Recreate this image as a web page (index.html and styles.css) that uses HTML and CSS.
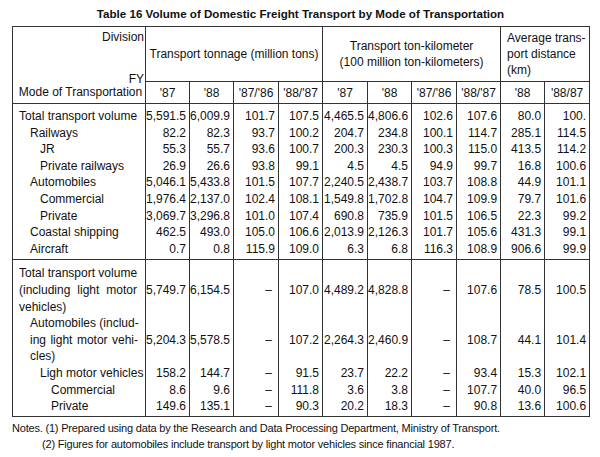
FILE: index.html
```html
<!DOCTYPE html>
<html>
<head>
<meta charset="utf-8">
<link rel="stylesheet" href="styles.css">
</head>
<body>
<div class="page">
  <h1 class="title">Table 16 Volume of Domestic Freight Transport by Mode of Transportation</h1>
  <table class="tbl">
    <colgroup>
      <col class="c-mode">
      <col class="c44"><col class="c44"><col class="c45"><col class="c44"><col class="c45">
      <col class="c44"><col class="c45"><col class="c44"><col class="c44"><col class="c45">
    </colgroup>
    <thead>
      <tr class="h1">
        <th rowspan="2" class="corner">
          <div class="corner-in">
            <span class="div-lbl">Division</span>
            <span class="fy-lbl">FY</span>
            <span class="mode-lbl">Mode of Transportation</span>
          </div>
        </th>
        <th colspan="4" class="grp">Transport tonnage (million tons)</th>
        <th colspan="4" class="grp">Transport ton-kilometer<br>(100 million ton-kilometers)</th>
        <th colspan="2" class="grp avg">Average trans-<br>port distance<br>(km)</th>
      </tr>
      <tr class="h2">
        <th>'87</th><th>'88</th><th>'87/'86</th><th>'88/'87</th>
        <th>'87</th><th>'88</th><th>'87/'86</th><th>'88/'87</th>
        <th>'88</th><th>'88/87</th>
      </tr>
    </thead>
    <tbody class="sec">
      <tr class="first"><td class="l0">Total transport volume</td><td>5,591.5</td><td>6,009.9</td><td>101.7</td><td>107.5</td><td>4,465.5</td><td>4,806.6</td><td>102.6</td><td>107.6</td><td>80.0</td><td>100.</td></tr>
      <tr><td class="l1">Railways</td><td>82.2</td><td>82.3</td><td>93.7</td><td>100.2</td><td>204.7</td><td>234.8</td><td>100.1</td><td>114.7</td><td>285.1</td><td>114.5</td></tr>
      <tr><td class="l2">JR</td><td>55.3</td><td>55.7</td><td>93.6</td><td>100.7</td><td>200.3</td><td>230.3</td><td>100.3</td><td>115.0</td><td>413.5</td><td>114.2</td></tr>
      <tr><td class="l2">Private railways</td><td>26.9</td><td>26.6</td><td>93.8</td><td>99.1</td><td>4.5</td><td>4.5</td><td>94.9</td><td>99.7</td><td>16.8</td><td>100.6</td></tr>
      <tr><td class="l1">Automobiles</td><td>5,046.1</td><td>5,433.8</td><td>101.5</td><td>107.7</td><td>2,240.5</td><td>2,438.7</td><td>103.7</td><td>108.8</td><td>44.9</td><td>101.1</td></tr>
      <tr><td class="l2">Commercial</td><td>1,976.4</td><td>2,137.0</td><td>102.4</td><td>108.1</td><td>1,549.8</td><td>1,702.8</td><td>104.7</td><td>109.9</td><td>79.7</td><td>101.6</td></tr>
      <tr><td class="l2">Private</td><td>3,069.7</td><td>3,296.8</td><td>101.0</td><td>107.4</td><td>690.8</td><td>735.9</td><td>101.5</td><td>106.5</td><td>22.3</td><td>99.2</td></tr>
      <tr><td class="l1">Coastal shipping</td><td>462.5</td><td>493.0</td><td>105.0</td><td>106.6</td><td>2,013.9</td><td>2,126.3</td><td>101.7</td><td>105.6</td><td>431.3</td><td>99.1</td></tr>
      <tr class="last"><td class="l1">Aircraft</td><td>0.7</td><td>0.8</td><td>115.9</td><td>109.0</td><td>6.3</td><td>6.8</td><td>116.3</td><td>108.9</td><td>906.6</td><td>99.9</td></tr>
    </tbody>
    <tbody class="sec sec2">
      <tr class="first"><td class="l0"><div class="ln">Total transport volume</div><div class="ln just">(including light motor</div><div class="ln">vehicles)</div></td><td>5,749.7</td><td>6,154.5</td><td class="dash">–</td><td>107.0</td><td>4,489.2</td><td>4,828.8</td><td class="dash">–</td><td>107.6</td><td>78.5</td><td>100.5</td></tr>
      <tr><td class="l1 tight"><div class="ln just">Automobiles (includ-</div><div class="ln just">ing light motor vehi-</div><div class="ln">cles)</div></td><td>5,204.3</td><td>5,578.5</td><td class="dash">–</td><td>107.2</td><td>2,264.3</td><td>2,460.9</td><td class="dash">–</td><td>108.7</td><td>44.1</td><td>101.4</td></tr>
      <tr><td class="l2">Ligh motor vehicles</td><td>158.2</td><td>144.7</td><td class="dash">–</td><td>91.5</td><td>23.7</td><td>22.2</td><td class="dash">–</td><td>93.4</td><td>15.3</td><td>102.1</td></tr>
      <tr><td class="l3">Commercial</td><td>8.6</td><td>9.6</td><td class="dash">–</td><td>111.8</td><td>3.6</td><td>3.8</td><td class="dash">–</td><td>107.7</td><td>40.0</td><td>96.5</td></tr>
      <tr class="last"><td class="l3">Private</td><td>149.6</td><td>135.1</td><td class="dash">–</td><td>90.3</td><td>20.2</td><td>18.3</td><td class="dash">–</td><td>90.8</td><td>13.6</td><td>100.6</td></tr>
    </tbody>
  </table>
  <div class="notes">
    <p class="note">Notes. (1) Prepared using data by the Research and Data Processing Department, Ministry of Transport.</p>
    <p class="note note2">(2) Figures for automobiles include transport by light motor vehicles since financial 1987.</p>
  </div>
</div>
</body>
</html>
```

FILE: styles.css
```css
html, body {
  margin: 0;
  padding: 0;
  background: #ffffff;
}
body {
  font-family: "Liberation Sans", Arial, sans-serif;
  color: #111;
}
.page {
  width: 600px;
  height: 457px;
  padding: 0 0 0 12px;
  box-sizing: border-box;
}
.title {
  margin: 6px 0 0 0;
  width: 577px;
  font-size: 11.6px;
  line-height: 16px;
  font-weight: bold;
  text-align: center;
  height: 20px;
}
.tbl {
  border-collapse: collapse;
  table-layout: fixed;
  width: 577px;
  font-size: 12px;
  border: 1px solid #333;
}
.c-mode { width: 133px; }
.c44 { width: 44px; }
.c45 { width: 45px; }
.tbl th, .tbl td {
  border-left: 1px solid #333;
  border-right: 1px solid #333;
  padding: 0;
}
.tbl th {
  font-weight: normal;
}
.h1 th {
  height: 54px;
  line-height: 16.5px;
  text-align: center;
  vertical-align: middle;
}
.h1 .avg {
  text-align: left;
  padding-left: 6px;
  line-height: 16px;
}
.h2 th {
  height: 21px;
  border-top: 1px solid #333;
  border-bottom: 1px solid #333;
  text-align: center;
  vertical-align: middle;
}
.corner {
  border-bottom: 1px solid #333;
  vertical-align: top;
}
.corner-in {
  display: flex;
  flex-direction: column;
  height: 76px;
  line-height: 14px;
}
.div-lbl {
  align-self: flex-end;
  padding: 3px 1px 0 0;
}
.fy-lbl {
  align-self: flex-end;
  padding-right: 1px;
  margin-top: auto;
  line-height: 12px;
}
.mode-lbl {
  align-self: center;
  padding: 0 0 4px 3px;
}
.sec td {
  line-height: 16.6px;
  text-align: right;
  padding-right: 3px;
  vertical-align: middle;
  white-space: nowrap;
}
.sec td.dash {
  padding-right: 6px;
}
.sec tr.first td {
  padding-top: 4px;
}
.sec tr.last td {
  padding-bottom: 2px;
}
.sec2 tr.first td {
  padding-top: 5px;
  border-top: 1px solid #333;
}
.sec2 tr.last td {
  padding-bottom: 1px;
}
.sec td.l0, .sec td.l1, .sec td.l2, .sec td.l3 {
  text-align: left;
  padding-right: 8px;
}
.sec td.l0 { padding-left: 6px; }
.sec td.l1 { padding-left: 17px; }
.sec td.l2 { padding-left: 27px; }
.sec td.l3 { padding-left: 38px; }
.sec td.tight { padding-right: 7px; }
.ln {
  white-space: nowrap;
}
.ln.just {
  text-align: justify;
  text-align-last: justify;
}
.notes {
  margin-top: 3px;
  font-size: 11px;
  letter-spacing: -0.2px;
  line-height: 16px;
}
.note {
  margin: 0;
  white-space: nowrap;
}
.note2 {
  padding-left: 30px;
}
```
